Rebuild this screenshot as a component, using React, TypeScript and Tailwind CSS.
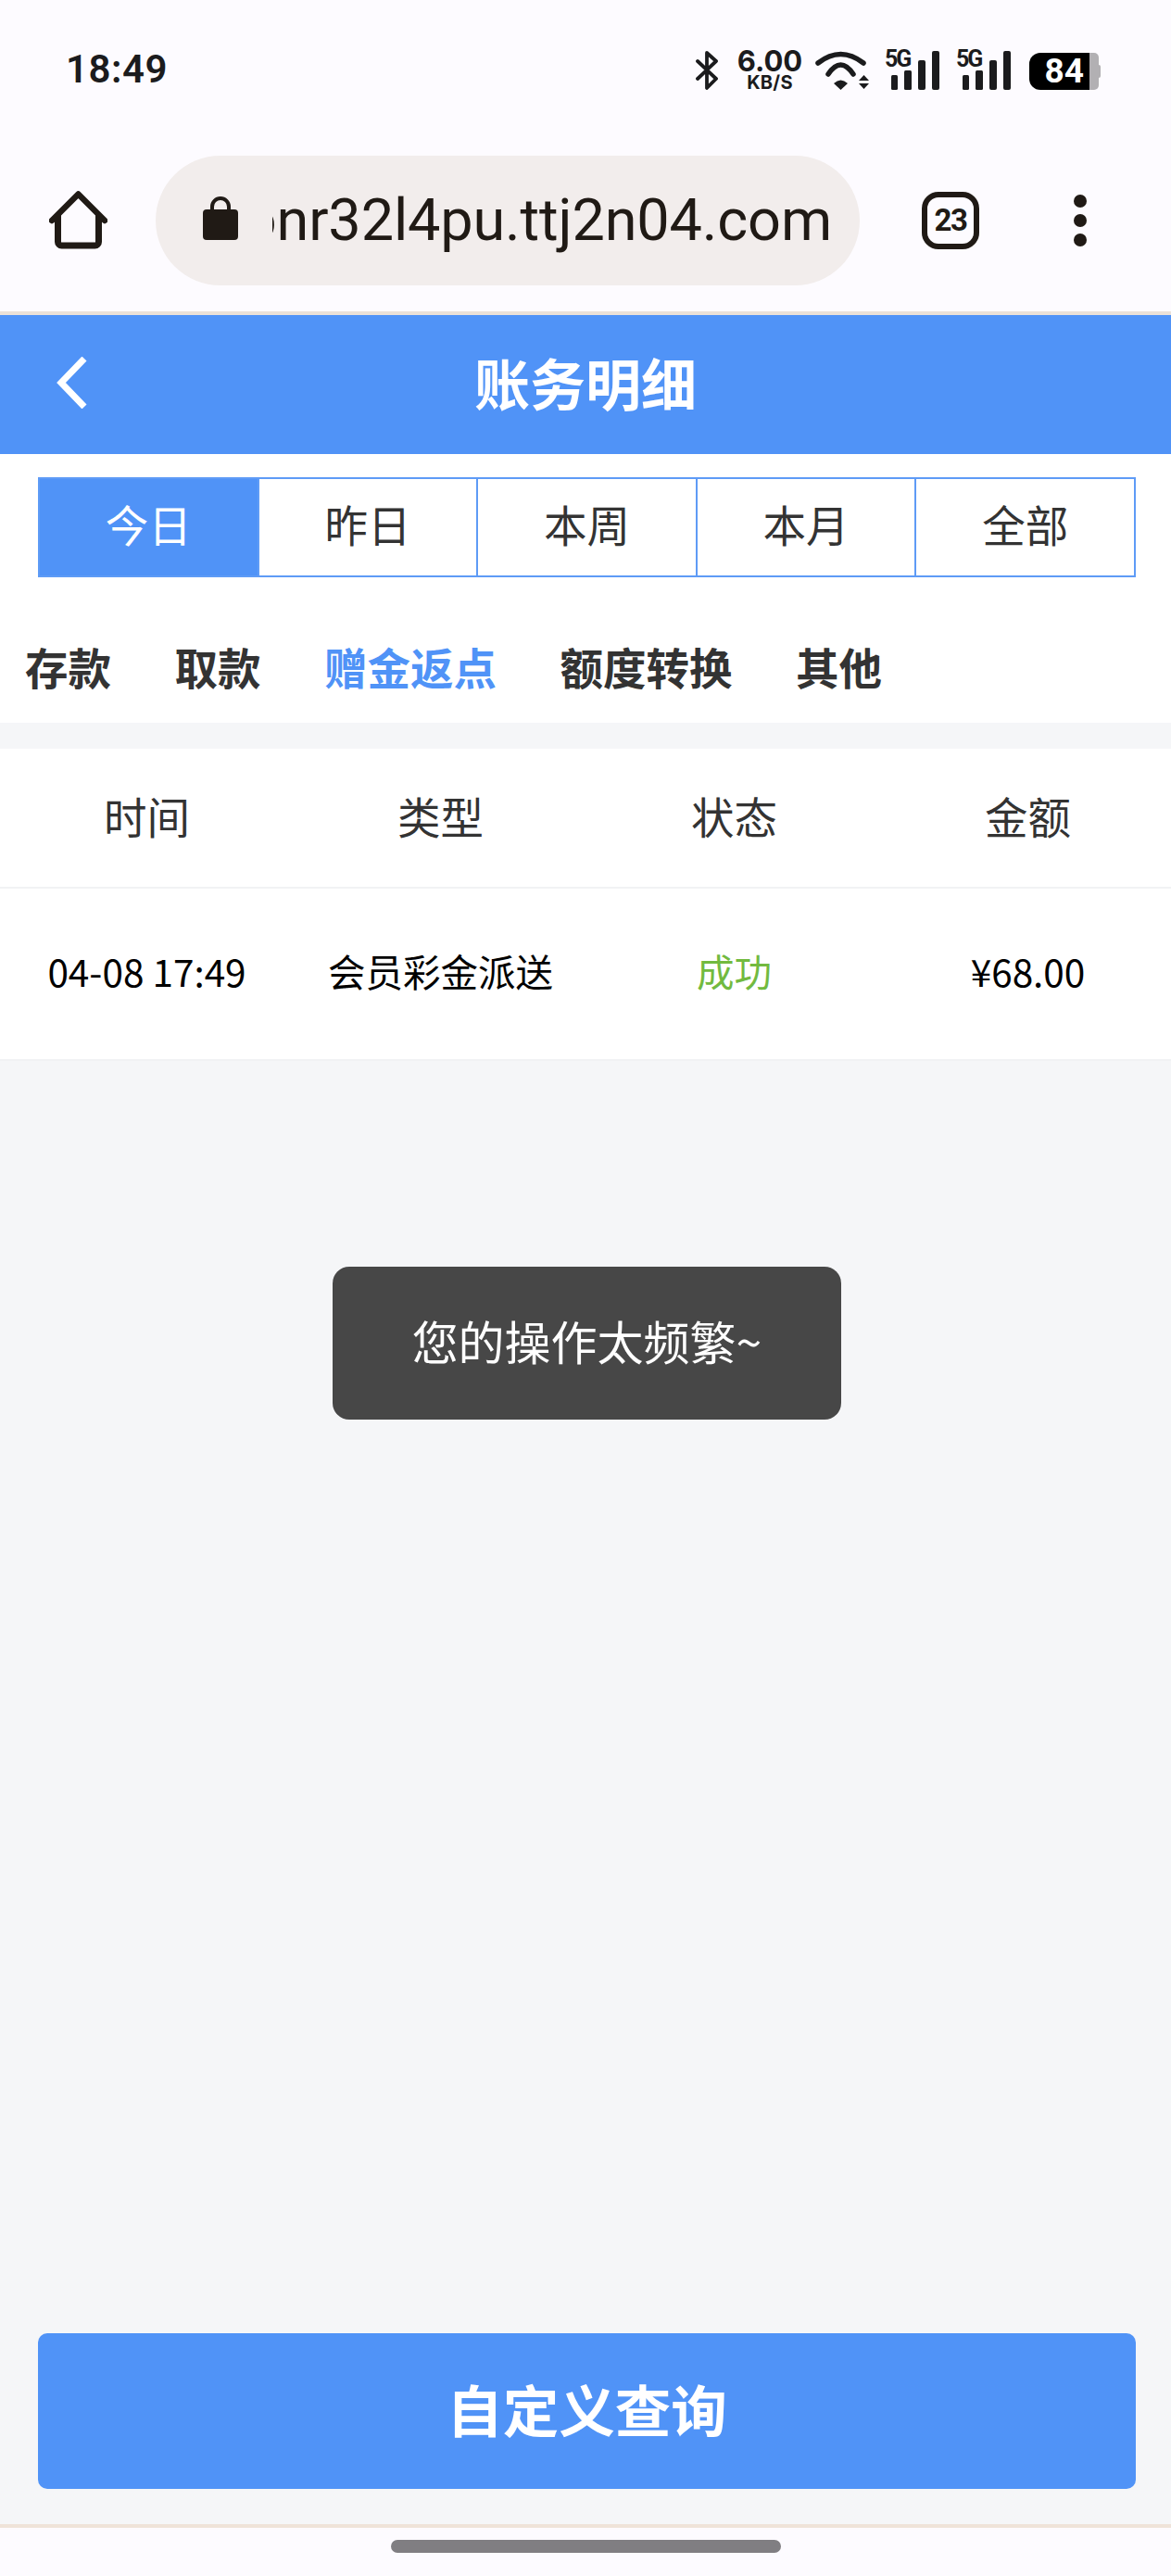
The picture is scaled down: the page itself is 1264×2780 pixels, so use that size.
import React from "react";

const cjk = "font-['Noto_Sans_CJK_SC','Noto_Sans',sans-serif]";

function SignalIcon({ className }: { className?: string }) {
  return (
    <div className={`relative w-[59px] h-[42px] ${className ?? ""}`}>
      <span className="absolute left-0 top-[-3px] font-['Roboto',sans-serif] font-bold text-[25px] leading-[24px] tracking-[-2px] text-[#1b1b1d]">
        5G
      </span>
      <svg width="59" height="42" viewBox="0 0 59 42" className="absolute left-0 top-0">
        <g fill="#1b1b1d">
          <rect x="7" y="26" width="7" height="16" rx="1.5" />
          <rect x="21" y="21" width="8" height="21" rx="1.5" />
          <rect x="36" y="10" width="8" height="32" rx="2" />
          <rect x="51" y="0" width="8" height="42" rx="2" />
        </g>
      </svg>
    </div>
  );
}

function StatusBar() {
  return (
    <div className="h-[150px] flex items-start justify-between pl-[71px] pr-[76px] pt-[55px] font-['Roboto',sans-serif] text-[#1b1b1d]">
      <span className="font-semibold text-[42px] leading-[40px] tracking-[0.5px]">18:49</span>
      <div className="flex items-start">
        <svg width="24" height="42" viewBox="0 0 24 42" fill="none" className="mr-[21px]">
          <path
            d="M2 11 L22 30 L12 40 V2 L22 11 L2 30"
            stroke="#1b1b1d"
            strokeWidth="3.8"
            strokeLinejoin="round"
            strokeLinecap="round"
          />
        </svg>
        <div className="w-[70px] mr-[13px] flex flex-col items-center font-['Inter',sans-serif] font-bold">
          <span className="text-[31px] leading-[22px]">6.00</span>
          <span className="mt-[5px] text-[20px] leading-[14px] tracking-[0.3px]">KB/S</span>
        </div>
        <svg width="59" height="42" viewBox="0 0 59 42" fill="none" className="mr-[17px]">
          <path d="M4 13 Q28.5 -6 53 13" stroke="#1b1b1d" strokeWidth="5.5" strokeLinecap="round" />
          <path d="M15 25 Q28.5 5 42 25" stroke="#1b1b1d" strokeWidth="5.5" strokeLinecap="round" />
          <path d="M21 35 Q28.5 28 36 35 L28.5 42 Z" fill="#1b1b1d" />
          <path d="M48 32 L53.5 26 L59 32 Z M48 35 L59 35 L53.5 41 Z" fill="#1b1b1d" />
        </svg>
        <SignalIcon className="mr-[18px]" />
        <SignalIcon className="mr-[20px]" />
        <div className="w-[77px] h-[40px] mt-[2px] flex">
          <div className="w-[65px] h-[40px] bg-black rounded-l-[12px] flex items-center justify-end pr-[6px]">
            <span className="text-white font-bold text-[37px] leading-[40px]">84</span>
          </div>
          <div className="w-[10px] h-[40px] bg-[#b2b0b3] rounded-r-[5px]" />
          <div className="w-[2px] h-[14px] mt-[13px] bg-[#b2b0b3] rounded-r-[2px]" />
        </div>
      </div>
    </div>
  );
}

function BrowserBar() {
  return (
    <div className="h-[186px] flex items-start pt-[18px] text-[#201a15]">
      <svg width="63" height="63" viewBox="0 0 63 63" fill="none" className="ml-[53px] mt-[38px] shrink-0">
        <path d="M3 32 L31.5 3.5 L60 32" stroke="#201a15" strokeWidth="6.5" strokeLinecap="round" strokeLinejoin="round" />
        <path d="M9.5 26 V55 a4 4 0 0 0 4 4 H49.5 a4 4 0 0 0 4 -4 V26" stroke="#201a15" strokeWidth="7" />
      </svg>
      <div className="ml-[52px] w-[760px] h-[140px] bg-[#f2edec] rounded-full flex items-center shrink-0">
        <svg width="38" height="48" viewBox="0 0 38 48" className="ml-[51px] mt-[-6px] shrink-0">
          <path d="M10 18 V12 a9 9 0 0 1 18 0 V18" fill="none" stroke="#201a15" strokeWidth="4" />
          <rect x="0" y="15" width="38" height="33" rx="4" fill="#201a15" />
        </svg>
        <div className="ml-[37px] w-[604px] overflow-hidden whitespace-nowrap flex justify-end font-['Roboto',sans-serif] text-[63px] leading-[72px] tracking-[-0.15px]">
          <span className="shrink-0">onr32l4pu.ttj2n04.com</span>
        </div>
      </div>
      <div className="ml-[67px] mt-[39px] w-[62px] h-[62px] shrink-0 border-[6px] border-[#201a15] rounded-[18px] flex items-center justify-center font-['Roboto',sans-serif] font-bold text-[33px] tracking-[-1.5px]">
        23
      </div>
      <div className="ml-[102px] mt-[42px] flex flex-col gap-[7px] shrink-0">
        <span className="w-[14px] h-[14px] rounded-full bg-[#201a15]" />
        <span className="w-[14px] h-[14px] rounded-full bg-[#201a15]" />
        <span className="w-[14px] h-[14px] rounded-full bg-[#201a15]" />
      </div>
    </div>
  );
}

function Header() {
  return (
    <div className="relative h-[150px] bg-[#5093f7] flex items-center justify-center pb-[6px]">
      <svg width="36" height="56" viewBox="0 0 36 56" fill="none" className="absolute left-[59px] top-[45px]">
        <path d="M32 2 L7 28 L32 54" stroke="white" strokeWidth="7" strokeLinejoin="miter" />
      </svg>
      <span className="text-white font-bold text-[60px] leading-[80px]">账务明细</span>
    </div>
  );
}

const ranges = ["今日", "昨日", "本周", "本月", "全部"];
const categories = ["存款", "取款", "赠金返点", "额度转换", "其他"];

function RangeTabs() {
  return (
    <div className="bg-white pt-[25px] pb-[40px] pl-[41px] pr-[38px]">
      <div className="flex h-[108px] border-2 border-[#5e9bf6]">
        {ranges.map((r, i) => (
          <div
            key={r}
            className={
              i === 0
                ? "flex-1 flex items-center justify-center pb-[8px] bg-[#5093f7] text-white text-[46.5px]"
                : "flex-1 flex items-center justify-center pb-[8px] border-l-2 border-[#5e9bf6] text-[#333] text-[46.5px]"
            }
          >
            {r}
          </div>
        ))}
      </div>
    </div>
  );
}

function CategoryTabs() {
  return (
    <div className="bg-white h-[117px] flex items-start gap-[68.5px] pl-[27px] pt-[21px]">
      {categories.map((c) => (
        <span
          key={c}
          className={
            c === "赠金返点"
              ? "font-bold text-[46.5px] leading-[70px] text-[#5093f7]"
              : "font-bold text-[46.5px] leading-[70px] text-[#333]"
          }
        >
          {c}
        </span>
      ))}
    </div>
  );
}

function RecordTable() {
  return (
    <div className="bg-white">
      <div className="grid grid-cols-[repeat(4,317px)] h-[151px] pb-[6px] items-center text-center text-[46.5px] text-[#333] border-b-2 border-[#f1f2f4]">
        <span>时间</span>
        <span>类型</span>
        <span>状态</span>
        <span>金额</span>
      </div>
      <div className="grid grid-cols-[repeat(4,317px)] h-[186px] pb-[6px] items-center text-center text-[40.5px] text-black border-b-2 border-[#f1f2f4]">
        <span>04-08 17:49</span>
        <span>会员彩金派送</span>
        <span className="text-[#72ba3f]">成功</span>
        <span>¥68.00</span>
      </div>
    </div>
  );
}

export default function App() {
  return (
    <div className={`relative w-[1264px] h-[2780px] bg-[#fdfbff] flex flex-col overflow-hidden ${cjk}`}>
      <StatusBar />
      <BrowserBar />
      <div className="h-[4px] bg-[#ebe1d8]" />
      <Header />
      <RangeTabs />
      <CategoryTabs />
      <div className="h-[28px] bg-[#f5f6f8]" />
      <RecordTable />
      <div className="flex-1 bg-[#f5f6f8] flex flex-col justify-end pl-[41px] pr-[38px] pb-[38px]">
        <button className="h-[168px] pb-[6px] bg-[#5093f7] rounded-[10px] text-white font-bold text-[60.5px]">
          自定义查询
        </button>
      </div>
      <div className="h-[4px] bg-[#efe3d9]" />
      <div className="h-[52px] flex justify-center pt-[13px]">
        <div className="w-[421px] h-[14px] rounded-full bg-[#807e82]" />
      </div>
      {/* toast */}
      <div className="absolute left-[359px] top-[1367px] w-[549px] h-[165px] pb-[6px] rounded-[18px] bg-[#474747] flex items-center justify-center text-white text-[50px]">
        您的操作太频繁~
      </div>
    </div>
  );
}
